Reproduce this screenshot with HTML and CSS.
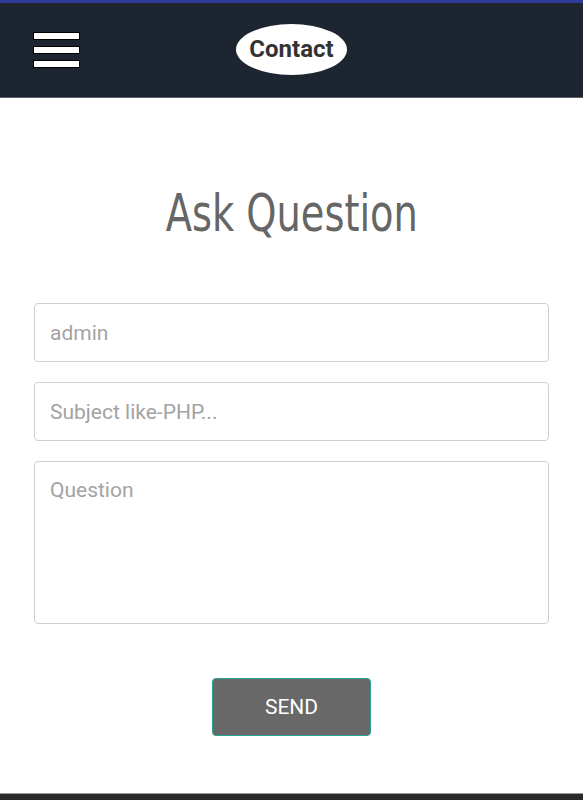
FILE: index.html
```html
<!DOCTYPE html>
<html>
<head>
<meta charset="utf-8">
<link rel="stylesheet" href="styles.css">
</head>
<body>
<header class="topbar">
  <div class="menu-cell">
    <div class="burger">
      <span class="bar"></span>
      <span class="bar"></span>
      <span class="bar"></span>
    </div>
  </div>
  <div class="brand">Contact</div>
  <div></div>
</header>
<main class="content">
  <h1 class="title"><span class="title-text">Ask Question</span></h1>
  <form class="form">
    <input class="field" type="text" placeholder="admin">
    <input class="field" type="text" placeholder="Subject like-PHP...">
    <textarea class="field area" placeholder="Question"></textarea>
    <div class="actions">
      <button class="send" type="button">SEND</button>
    </div>
  </form>
</main>
<footer class="bottom"></footer>
</body>
</html>
```
FILE: styles.css
```css
html, body {
  margin: 0;
  padding: 0;
  background: #fff;
  font-family: Roboto, "Liberation Sans", sans-serif;
}
body {
  height: 800px;
  overflow: hidden;
  display: flex;
  flex-direction: column;
}
.topbar {
  border-top: 3px solid #2e3b9a;
  border-bottom: 1px solid #5b5e63;
  background: #1c2530;
  height: 94px;
  display: grid;
  grid-template-columns: 1fr auto 1fr;
  align-items: center;
}
.menu-cell {
  padding-left: 33px;
}
.burger {
  display: flex;
  flex-direction: column;
  gap: 6px;
  width: 47px;
}
.bar {
  display: block;
  height: 6px;
  background: #fff;
  border: 1px solid #000;
}
.brand {
  width: 111px;
  height: 51px;
  border-radius: 50%;
  background: #fff;
  color: #333;
  font-weight: 700;
  font-size: 24px;
  display: flex;
  align-items: center;
  justify-content: center;
  margin-top: -2px;
}
.content {
  flex: 1;
  padding: 0 34px;
}
.title {
  margin: 80px 0 0;
  text-align: center;
  font-family: "DejaVu Sans Condensed", "DejaVu Sans", sans-serif;
  font-stretch: condensed;
  font-weight: 400;
  font-size: 52px;
  line-height: 70px;
  color: #666;
}
.title-text {
  display: inline-block;
  transform: scaleX(0.82);
}
.form {
  margin-top: 55px;
  display: flex;
  flex-direction: column;
  gap: 20px;
}
.field {
  display: block;
  box-sizing: border-box;
  width: 100%;
  height: 59px;
  border: 1px solid #cfcfcf;
  border-radius: 4px;
  padding: 0 15px;
  font-family: Roboto, sans-serif;
  font-size: 21px;
  color: #333;
  outline: none;
}
.field::placeholder {
  color: #a3a3a3;
}
.area {
  height: 163px;
  padding-top: 16px;
  resize: none;
}
.actions {
  display: flex;
  justify-content: center;
  margin-top: 34px;
}
.send {
  width: 159px;
  height: 58px;
  background: #686868;
  border: 1px solid #2aa397;
  border-radius: 4px;
  color: #fff;
  font-family: Roboto, sans-serif;
  font-size: 21px;
  padding: 0;
}
.bottom {
  height: 6px;
  border-top: 1px solid #9a9a9a;
  background: #2a2a2a;
}
```
